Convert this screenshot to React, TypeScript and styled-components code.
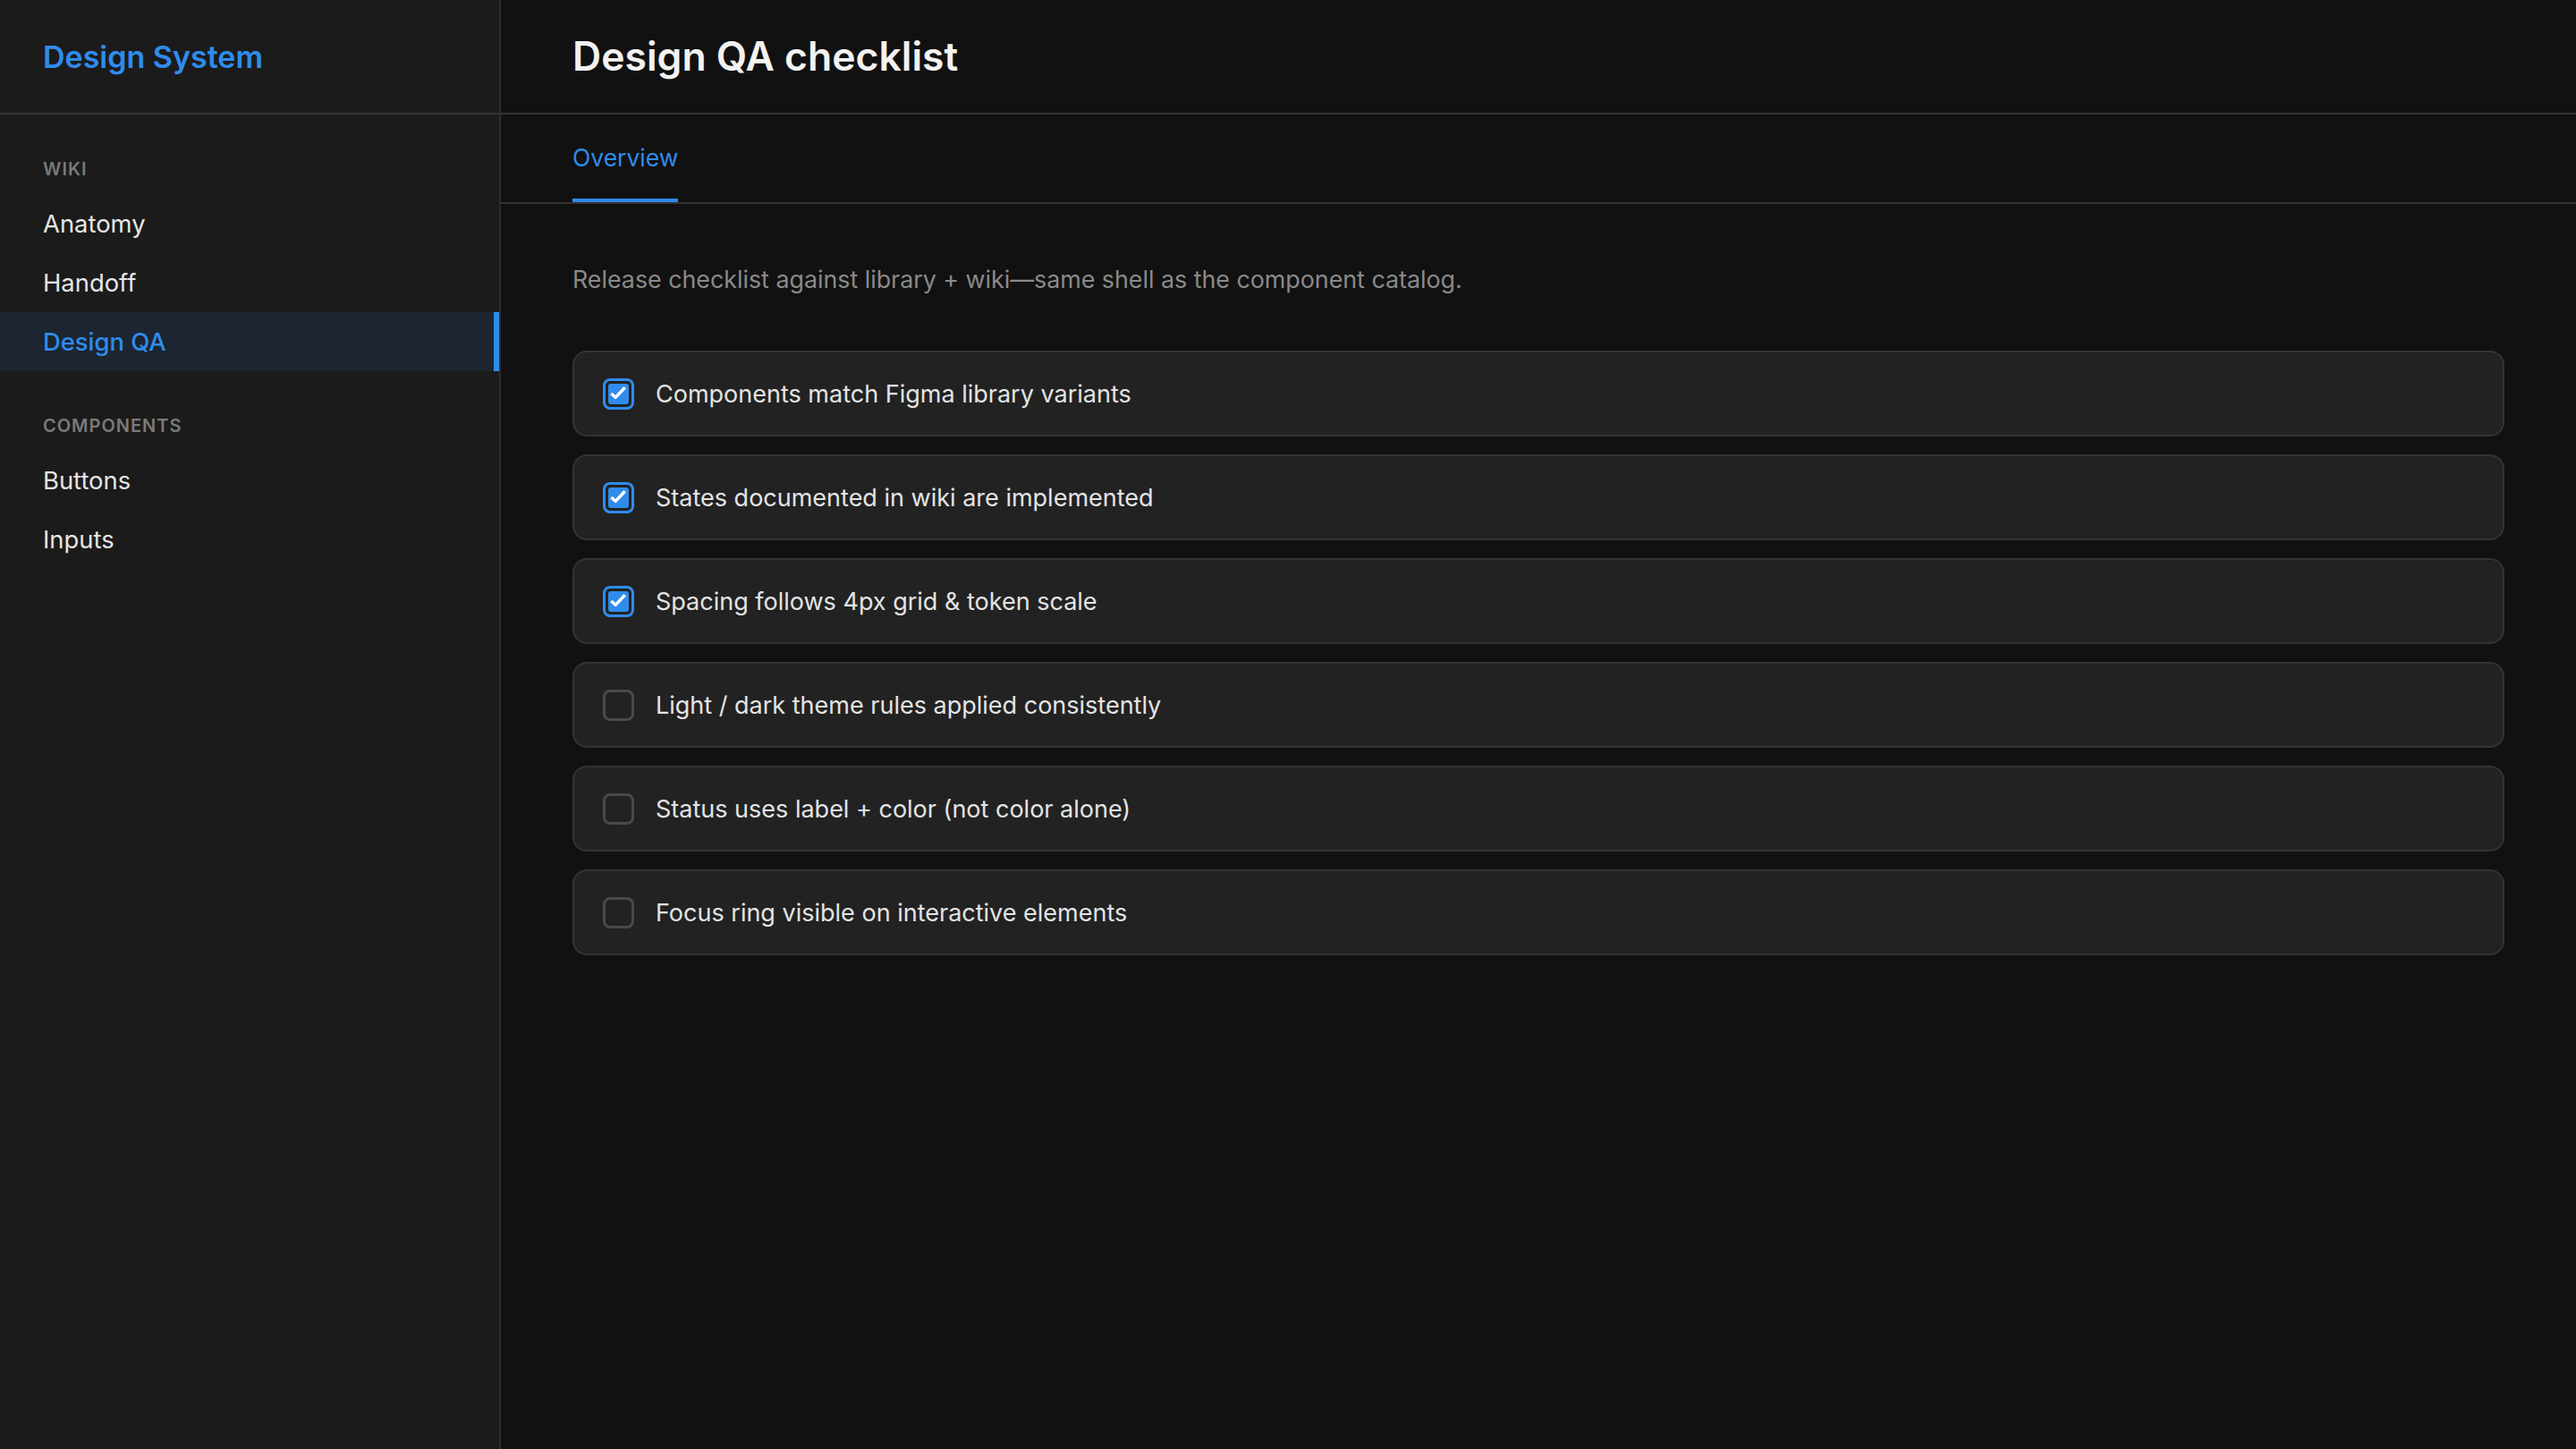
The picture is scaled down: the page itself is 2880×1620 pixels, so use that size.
import React from 'react';
import styled, { createGlobalStyle } from 'styled-components';

const ACCENT = '#2f8cec';

const GlobalStyle = createGlobalStyle`
  html, body {
    margin: 0;
    padding: 0;
    background: #111111;
    font-family: Inter, 'Noto Sans', 'Liberation Sans', sans-serif;
    -webkit-font-smoothing: antialiased;
  }
  * {
    box-sizing: border-box;
  }
`;

const Shell = styled.div`
  display: flex;
  width: 100%;
  height: 100vh;
  overflow: hidden;
  background: #111111;
`;

const Sidebar = styled.aside`
  width: 560px;
  flex-shrink: 0;
  display: flex;
  flex-direction: column;
  background: #1b1b1b;
  border-right: 2px solid #2e2e2e;
`;

const Brand = styled.div`
  height: 128px;
  display: flex;
  align-items: center;
  padding: 0 48px;
  border-bottom: 2px solid #333333;
  color: ${ACCENT};
  font-size: 34px;
  font-weight: 600;
`;

const NavSection = styled.nav`
  display: flex;
  flex-direction: column;
  padding-top: 45px;
`;

const SectionLabel = styled.div`
  padding: 0 48px;
  margin-bottom: 12px;
  line-height: 32px;
  font-size: 20px;
  font-weight: 600;
  letter-spacing: 1px;
  text-transform: uppercase;
  color: #7a7a7a;
`;

const NavItem = styled.a<{ $active?: boolean }>`
  height: 66px;
  display: flex;
  align-items: center;
  padding: 0 48px;
  font-size: 27.4px;
  font-weight: ${(props) => (props.$active ? 500 : 400)};
  color: ${(props) => (props.$active ? ACCENT : '#e6e6e6')};
  background: ${(props) => (props.$active ? '#1c2530' : 'transparent')};
  box-shadow: ${(props) => (props.$active ? `inset -6px 0 0 ${ACCENT}` : 'none')};
  text-decoration: none;
  cursor: pointer;
`;

const Main = styled.main`
  flex: 1;
  display: flex;
  flex-direction: column;
  min-width: 0;
`;

const PageHeader = styled.header`
  height: 128px;
  display: flex;
  align-items: center;
  padding: 0 80px;
  border-bottom: 2px solid #333333;
`;

const Title = styled.h1`
  margin: 0;
  font-size: 44.5px;
  font-weight: 600;
  color: #f2f2f2;
`;

const TabBar = styled.div`
  display: flex;
  padding: 0 80px;
  border-bottom: 2px solid #333333;
`;

const Tab = styled.div<{ $active?: boolean }>`
  padding: 28px 0 26px;
  line-height: 40px;
  font-size: 26.5px;
  color: ${(props) => (props.$active ? ACCENT : '#9a9a9a')};
  border-bottom: 4px solid ${(props) => (props.$active ? ACCENT : 'transparent')};
`;

const Content = styled.section`
  padding: 64px 80px;
`;

const Lead = styled.p`
  margin: 0 0 60px;
  line-height: 40px;
  font-size: 26.8px;
  color: #8a8a8a;
`;

const Checklist = styled.div`
  display: flex;
  flex-direction: column;
  gap: 20px;
`;

const Card = styled.div`
  height: 96px;
  display: flex;
  align-items: center;
  gap: 24px;
  padding: 0 32px;
  background: #222222;
  border: 2px solid #333333;
  border-radius: 16px;
`;

const Box = styled.span<{ $checked: boolean }>`
  width: 35px;
  height: 35px;
  flex-shrink: 0;
  display: flex;
  padding: 3px;
  border: 3px solid ${(props) => (props.$checked ? ACCENT : '#4a4a4a')};
  border-radius: 8px;
`;

const Fill = styled.span`
  flex: 1;
  display: flex;
  align-items: center;
  justify-content: center;
  background: ${ACCENT};
  border-radius: 3px;
`;

const ItemText = styled.span`
  font-size: 27px;
  color: #e4e4e4;
`;

interface ICheckItem {
  label: string,
  done: boolean
}

const items: ICheckItem[] = [
  { label: 'Components match Figma library variants', done: true },
  { label: 'States documented in wiki are implemented', done: true },
  { label: 'Spacing follows 4px grid & token scale', done: true },
  { label: 'Light / dark theme rules applied consistently', done: false },
  { label: 'Status uses label + color (not color alone)', done: false },
  { label: 'Focus ring visible on interactive elements', done: false },
];

const CheckBox = ({ checked }: { checked: boolean }) => (
  <Box $checked={checked} role="checkbox" aria-checked={checked}>
    {checked && (
      <Fill>
        <svg width="23" height="23" viewBox="0 0 24 24">
          <polyline
            points="3.5,11.5 8.5,16 19.5,4.5"
            fill="none"
            stroke="#ffffff"
            strokeWidth="3.6"
            strokeLinejoin="round"
          />
        </svg>
      </Fill>
    )}
  </Box>
);

const App = () => (
  <>
    <GlobalStyle />
    <Shell>
      <Sidebar>
        <Brand>Design System</Brand>
        <NavSection>
          <SectionLabel>Wiki</SectionLabel>
          <NavItem>Anatomy</NavItem>
          <NavItem>Handoff</NavItem>
          <NavItem $active>Design QA</NavItem>
        </NavSection>
        <NavSection>
          <SectionLabel>Components</SectionLabel>
          <NavItem>Buttons</NavItem>
          <NavItem>Inputs</NavItem>
        </NavSection>
      </Sidebar>
      <Main>
        <PageHeader>
          <Title>Design QA checklist</Title>
        </PageHeader>
        <TabBar>
          <Tab $active>Overview</Tab>
        </TabBar>
        <Content>
          <Lead>Release checklist against library + wiki—same shell as the component catalog.</Lead>
          <Checklist>
            {items.map((item) => (
              <Card key={item.label}>
                <CheckBox checked={item.done} />
                <ItemText>{item.label}</ItemText>
              </Card>
            ))}
          </Checklist>
        </Content>
      </Main>
    </Shell>
  </>
);

export default App;
